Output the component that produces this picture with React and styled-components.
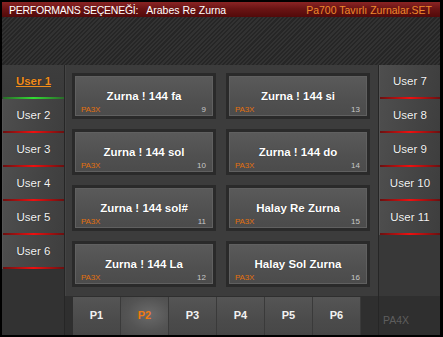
import React from "react";
import styled, { createGlobalStyle, css } from "styled-components";

const Global = createGlobalStyle`
  html, body { margin: 0; padding: 0; background: #000; }
  body { font-family: "Liberation Sans", Arial, sans-serif; }
  * { box-sizing: border-box; }
`;

const Frame = styled.div`
  width: 443px;
  height: 337px;
  border: 2px solid #000;
  border-right-width: 3px;
  background: #2e2e2e;
  display: flex;
  flex-direction: column;
  overflow: hidden;
`;

const Header = styled.div`
  height: 15px;
  flex: none;
  display: flex;
  align-items: center;
  padding: 0 8px 0 7px;
  background: linear-gradient(#8a2424, #6a1414 45%, #520a0a);
  font-size: 10.5px;
  color: #fff;
  white-space: nowrap;
`;

const HeaderLabel = styled.span`
  margin-right: 8px;
  letter-spacing: -0.25px;
`;

const HeaderSet = styled.span`
  margin-left: auto;
  color: #f08a2c;
`;

const Stripes = styled.div`
  height: 48px;
  flex: none;
  background: repeating-linear-gradient(
    -45deg,
    #262626 0px,
    #262626 1.5px,
    #323232 1.5px,
    #323232 3px
  );
`;

const Main = styled.div`
  flex: 1;
  display: flex;
  min-height: 0;
`;

const SideColumn = styled.div`
  width: ${(p) => p.$w}px;
  flex: none;
  display: flex;
  flex-direction: column;
  background: #323232;
  border-${(p) => (p.$side === "left" ? "right" : "left")}: 1px solid #262626;
`;

const lineGradient = (c1, c2) => css`
  background: linear-gradient(90deg, ${c1}, ${c2} 50%, ${c1});
`;

const UserButton = styled.div`
  height: 34px;
  flex: none;
  position: relative;
  display: flex;
  align-items: center;
  justify-content: center;
  padding-bottom: 2px;
  font-size: 11.5px;
  color: #f4f4f4;
  text-shadow: 0 0 1px rgba(0, 0, 0, 0.6);
  background: ${(p) =>
    p.$active
      ? "linear-gradient(#3d3d3d, #3a3a3a)"
      : "linear-gradient(100deg, #4e4e4e, #444 60%, #3e3e3e)"};
  border-left: 1px solid ${(p) => (p.$active ? "#3a3a3a" : "#555")};
  ${(p) =>
    p.$active &&
    css`
      color: #f08c1c;
      font-weight: bold;
      text-decoration: underline;
    `}
  &::after {
    content: "";
    position: absolute;
    left: 0;
    right: 0;
    bottom: 0;
    height: 2px;
    ${(p) =>
      p.$active
        ? lineGradient("#2a6a2a", "#33dd33")
        : lineGradient("#6a1010", "#ee1010")}
  }
`;

const Center = styled.div`
  width: 313px;
  flex: none;
  display: flex;
  flex-direction: column;
`;

const Panel = styled.div`
  height: 231px;
  flex: none;
  background: #3c3c3c;
  border-left: 1px solid #444;
  display: grid;
  grid-template-columns: 144px 144px;
  grid-auto-rows: 46px;
  column-gap: 10px;
  row-gap: 10px;
  padding: 8px 0 0 6px;
`;

const Card = styled.div`
  position: relative;
  border: 3px solid #2a2a2a;
  background: linear-gradient(#5a5a5a, #505050 60%, #4b4b4b);
  box-shadow: inset 0 0 0 1px #606060;
  display: flex;
  align-items: center;
  justify-content: center;
  padding-bottom: 1px;
`;

const CardTitle = styled.div`
  color: #fff;
  font-weight: bold;
  font-size: 11.5px;
  white-space: nowrap;
  text-shadow: 0 0 1px rgba(0, 0, 0, 0.5);
`;

const CardTag = styled.div`
  position: absolute;
  left: 6px;
  bottom: 2px;
  font-size: 8px;
  letter-spacing: -0.2px;
  color: #e0700e;
`;

const CardNumber = styled.div`
  position: absolute;
  right: 7px;
  bottom: 2px;
  font-size: 8px;
  color: #c8c8c8;
`;

const TabsRow = styled.div`
  flex: 1;
  display: flex;
  align-items: stretch;
  padding: 1px 0 0 8px;
  background: #2f2f2f;
`;

const Tab = styled.div`
  width: 48px;
  flex: none;
  display: flex;
  align-items: center;
  justify-content: center;
  padding-bottom: 3px;
  font-size: 11px;
  font-weight: bold;
  color: ${(p) => (p.$active ? "#f07a10" : "#f2f2f2")};
  border-right: 1px solid #3a3a3a;
  background: ${(p) =>
    p.$active
      ? "radial-gradient(ellipse at 60% 45%, #6a6a6a, #545454 55%, #4a4a4a)"
      : "linear-gradient(#555, #4b4b4b 60%, #474747)"};
`;

const BrandMark = styled.div`
  height: 39px;
  flex: none;
  display: flex;
  align-items: center;
  padding: 9px 0 0 4px;
  font-size: 10.5px;
  color: #5e5e5e;
  background: #2f2f2f;
`;

const Spacer = styled.div`
  flex: 1;
  background: #383838;
`;

const leftUsers = ["User 1", "User 2", "User 3", "User 4", "User 5", "User 6"];
const rightUsers = ["User 7", "User 8", "User 9", "User 10", "User 11"];

const cards = [
  ["Zurna ! 144 fa", 9],
  ["Zurna ! 144 si", 13],
  ["Zurna ! 144 sol", 10],
  ["Zurna ! 144 do", 14],
  ["Zurna ! 144 sol#", 11],
  ["Halay Re Zurna", 15],
  ["Zurna ! 144 La", 12],
  ["Halay Sol Zurna", 16],
];

const tabs = ["P1", "P2", "P3", "P4", "P5", "P6"];

export default function App() {
  return (
    <>
      <Global />
      <Frame>
        <Header>
          <HeaderLabel>PERFORMANS SEÇENEĞİ:</HeaderLabel>
          <span>Arabes Re Zurna</span>
          <HeaderSet>Pa700 Tavırlı Zurnalar.SET</HeaderSet>
        </Header>
        <Stripes />
        <Main>
          <SideColumn $w={63} $side="left">
            {leftUsers.map((u, i) => (
              <UserButton key={u} $active={i === 0}>
                {u}
              </UserButton>
            ))}
          </SideColumn>
          <Center>
            <Panel>
              {cards.map(([t, n]) => (
                <Card key={n}>
                  <CardTitle>{t}</CardTitle>
                  <CardTag>PA3X</CardTag>
                  <CardNumber>{n}</CardNumber>
                </Card>
              ))}
            </Panel>
            <TabsRow>
              {tabs.map((t, i) => (
                <Tab key={t} $active={i === 1}>
                  {t}
                </Tab>
              ))}
            </TabsRow>
          </Center>
          <SideColumn $w={62} $side="right">
            {rightUsers.map((u) => (
              <UserButton key={u}>{u}</UserButton>
            ))}
            <Spacer />
            <BrandMark>PA4X</BrandMark>
          </SideColumn>
        </Main>
      </Frame>
    </>
  );
}
